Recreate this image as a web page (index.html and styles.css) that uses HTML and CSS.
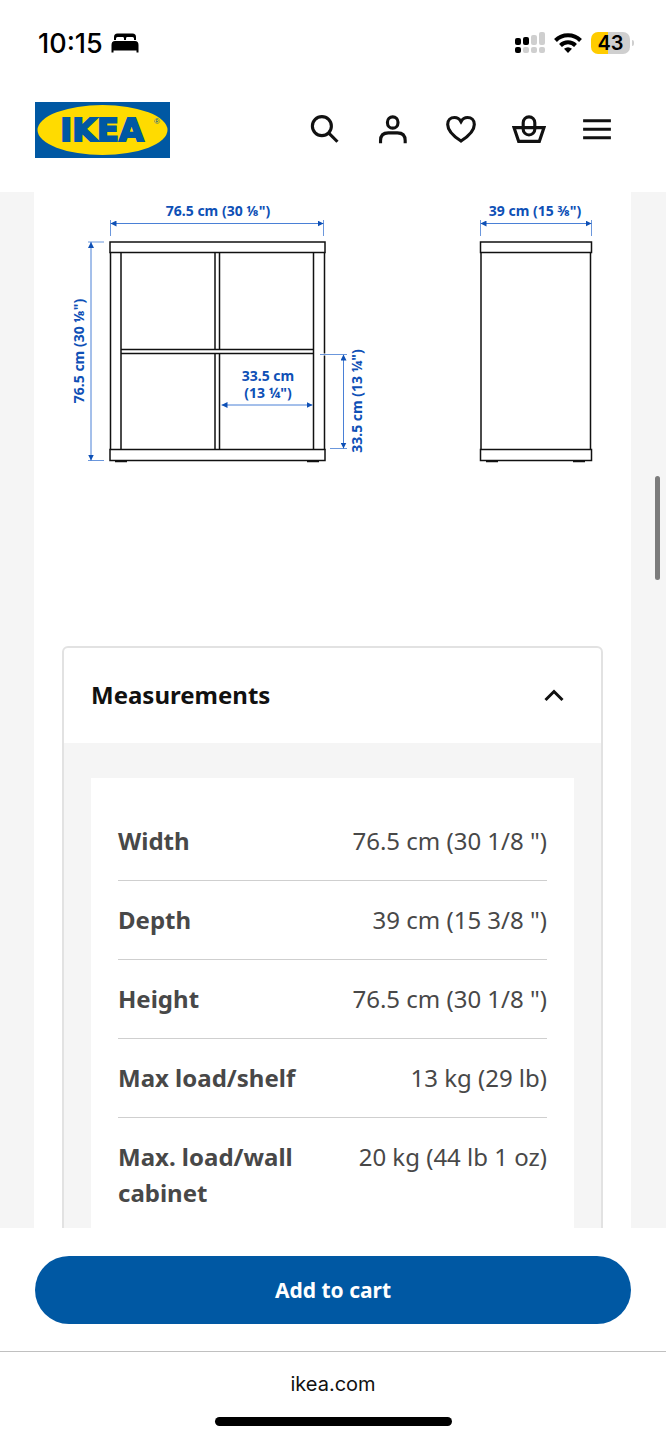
FILE: index.html
```html
<!DOCTYPE html>
<html lang="en">
<head>
  <meta charset="UTF-8" />
  <meta name="viewport" content="width=device-width, initial-scale=1" />
  <title>Measurements - IKEA</title>
  <link rel="stylesheet" href="styles.css">
</head>
<body>
  <!-- Phone status bar -->
  <div class="status-bar">
    <div class="status-left">
      <span class="time">10:15</span>
      <svg class="bed" width="28" height="20" viewBox="0 0 28 20">
        <path d="M3 7V4q0-3.500 3.500-3.500h15q3.500 0 3.500 3.500v3h-2V5.500q0-1.500-1.500-1.500H16q-1 0-1 1.500V7h-2V5.500Q13 4 12 4H6.500Q5 4 5 5.500V7z" />
        <path d="M4 8h20q3.500 0 3.500 4v7.500h-2V17.500h-23v2h-2V12q0-4 3.500-4z" />
      </svg>
    </div>
    <div class="status-right">
      <svg width="30" height="22" viewBox="0 0 30 22">
        <rect x="0" y="6" width="6" height="7" rx="2" />
        <rect x="8" y="5" width="6" height="8" rx="2" />
        <g fill="#cfcfcf">
          <rect x="16" y="3" width="6" height="10" rx="2" />
          <rect x="24" y="0" width="6" height="13" rx="2" />
          <rect x="8" y="15" width="6" height="6" rx="2" />
          <rect x="16" y="15" width="6" height="6" rx="2" />
          <rect x="24" y="15" width="6" height="6" rx="2" />
        </g>
        <rect x="0" y="15" width="6" height="6" rx="2" />
      </svg>
      <svg width="28" height="20" viewBox="0 0 28 20">
        <g fill="none" stroke="#000" stroke-width="4">
          <path d="M1.500 7.500a17.500 17.500 0 0 1 25 0" />
          <path d="M6.500 12.500a10.500 10.500 0 0 1 15 0" />
        </g>
        <path d="M14 20l-4-4.200q4-3.200 8 0z" />
      </svg>
      <span class="battery">43</span>
    </div>
  </div>

  <header class="site-header">
    <a class="logo" href="#" aria-label="IKEA">
      <svg width="135" height="56" viewBox="0 0 135 56">
        <rect width="135" height="56" fill="#0058a3" />
        <ellipse cx="67.500" cy="28" rx="65" ry="25" fill="#ffdb00" />
        <text class="logo-text" x="67" y="39" text-anchor="middle">IKEA</text>
        <text class="logo-mark" x="122" y="22" text-anchor="middle">®</text>
      </svg>
    </a>
    <nav class="header-icons">
      <button aria-label="Search">
        <svg viewBox="0 0 24 24"><circle cx="9.800" cy="10" r="6.700" /><path d="M14.500 14.700l6.300 6.300" /></svg>
      </button>
      <button aria-label="Account">
        <svg viewBox="0 0 24 24"><rect x="8.100" y="3.400" width="7.400" height="8" rx="3.700" /><path d="M3.200 22v-1.800q0-5.500 5.500-5.500h6.400q5.500 0 5.500 5.500V22" /></svg>
      </button>
      <button aria-label="Favourites">
        <svg viewBox="0 0 24 24"><path d="M12 20.500C5.500 16.300 2.600 12.800 2.600 8.800c0-2.900 2-4.900 4.800-4.900 2 0 3.600 1.100 4.600 2.900 1-1.800 2.600-2.900 4.600-2.900 2.800 0 4.800 2 4.800 4.900 0 4-2.900 7.500-9.400 11.700z" /></svg>
      </button>
      <button aria-label="Shopping basket">
        <svg viewBox="0 0 24 24"><path d="M1.400 11h21.200l-3.300 9.700H4.700z" /><rect x="7.900" y="3.400" width="8.200" height="12.800" rx="4.100" /></svg>
      </button>
      <button aria-label="Menu">
        <svg viewBox="0 0 24 24"><path d="M2.200 6.200h19.600M2.200 12.200h19.600M2.200 18.200h19.600" /></svg>
      </button>
    </nav>
  </header>

  <div class="viewport">
    <main class="sheet">
      <!-- Dimension drawing: front view and side view -->
      <svg class="drawing" viewBox="0 0 597 290" role="img" aria-label="Shelf unit dimensions">
        <defs>
          <marker id="arrow" viewBox="0 0 6 6" refX="6" refY="3" markerWidth="6" markerHeight="6" markerUnits="userSpaceOnUse" orient="auto-start-reverse">
            <path d="M0 0l6 3-6 3z" fill="#0e50b6" />
          </marker>
        </defs>

        <g class="outline">
          <rect x="76" y="50" width="215" height="10.500" />
          <rect x="76" y="257.500" width="215" height="11" />
          <path d="M76.500 60v198M87 60v198M279.500 60v198M290.500 60v198" />
          <path d="M181 60v97.500M185.500 60v97.500M181 161.500v96M185.500 161.500v96" />
          <path d="M87 157.500h192.500M87 161.500h192.500" />
          <path d="M81 269.500h12M273 269.500h12" />

          <rect x="446.500" y="50" width="111" height="10.500" />
          <rect x="446.500" y="257.500" width="111" height="11" />
          <path d="M447 60v198M556.500 60v198" />
          <path d="M452 269.500h12M539 269.500h12" />
        </g>

        <path d="M286 162.500h6" stroke="#fff" stroke-width="2" />
        <g class="ticks">
          <path d="M76.500 28v16M289.500 28v16M446.500 28v16M557.500 28v16" />
          <path d="M54 50h16M54 268.500h16M286 162.500h27M296 256.500h17" />
        </g>
        <g class="arrows">
          <path d="M76.500 31.500h213" />
          <path d="M446.500 31.500h111" />
          <path d="M57 50v218.500" />
          <path d="M187.500 213h91" />
          <path d="M309.500 162.500v94" />
        </g>

        <g class="labels">
          <text x="184" y="24">76.5 cm (30 ⅛")</text>
          <text x="501" y="24">39 cm (15 ⅜")</text>
          <text x="234" y="189">33.5 cm</text>
          <text x="234" y="206">(13 ¼")</text>
          <text transform="translate(50 159) rotate(-90)">76.5 cm (30 ⅛")</text>
          <text transform="translate(328 209) rotate(-90)">33.5 cm (13 ¼")</text>
        </g>
      </svg>

      <details class="card" open>
        <summary>
          <h2>Measurements</h2>
          <svg width="20" height="14" viewBox="0 0 20 14"><path d="M1.500 12L10 3.500l8.500 8.500" /></svg>
        </summary>
        <div class="card-body">
          <table>
            <tr><th scope="row">Width</th><td>76.5 cm (30 1/8 ")</td></tr>
            <tr><th scope="row">Depth</th><td>39 cm (15 3/8 ")</td></tr>
            <tr><th scope="row">Height</th><td>76.5 cm (30 1/8 ")</td></tr>
            <tr><th scope="row">Max load/shelf</th><td>13 kg (29 lb)</td></tr>
            <tr><th scope="row">Max. load/wall cabinet</th><td>20 kg (44 lb 1 oz)</td></tr>
          </table>
        </div>
      </details>
    </main>
    <div class="scroll-thumb"></div>
  </div>

  <div class="buy-bar">
    <button class="add-to-cart">Add to cart</button>
  </div>

  <footer class="browser-bar">
    <span>ikea.com</span>
    <div class="home-indicator"></div>
  </footer>
</body>
</html>
```
FILE: styles.css
```css
* {
  box-sizing: border-box;
}

body {
  margin: 0;
  height: 100vh;
  display: flex;
  flex-direction: column;
  background: #fff;
  color: #111;
  font-family: "Noto Sans", sans-serif;
}

button {
  border: none;
  background: none;
  padding: 0;
  font-family: inherit;
  cursor: pointer;
}

/* status bar */
.status-bar {
  height: 86px;
  flex-shrink: 0;
  display: flex;
  justify-content: space-between;
  align-items: center;
  padding: 0 32px 0 38px;
  color: #000;
  font-family: Inter, sans-serif;
}

.status-left {
  display: flex;
  align-items: center;
  gap: 8px;
}

.time {
  font-size: 27px;
  font-weight: 500;
}

.status-right {
  display: flex;
  align-items: center;
  gap: 9px;
}

.battery {
  position: relative;
  width: 39px;
  height: 22px;
  margin-right: 4px;
  border-radius: 7px;
  background: linear-gradient(to right, #ffcc00 43%, #cfcfcf 43%);
  font-size: 20px;
  line-height: 22px;
  font-weight: 600;
  text-align: center;
}

.battery::after {
  content: "";
  position: absolute;
  right: -4px;
  top: 8px;
  width: 2px;
  height: 6px;
  border-radius: 0 2px 2px 0;
  background: #cfcfcf;
}

/* header */
.site-header {
  height: 106px;
  flex-shrink: 0;
  display: flex;
  justify-content: space-between;
  align-items: flex-start;
  padding: 16px 35px 0;
}

.logo svg {
  display: block;
}

.logo-text {
  font-family: "DejaVu Sans", sans-serif;
  font-size: 32px;
  font-weight: bold;
  fill: #0058a3;
  stroke: #0058a3;
  stroke-width: 2;
}

.logo-mark {
  font-family: "Liberation Sans", sans-serif;
  font-size: 8px;
  fill: #0058a3;
}

.header-icons {
  display: flex;
}

.header-icons button {
  width: 68px;
  height: 54px;
  display: flex;
  align-items: center;
  justify-content: center;
}

.header-icons svg {
  width: 34px;
  height: 34px;
  fill: none;
  stroke: #111;
  stroke-width: 2.2;
}

/* scrolling page */
.viewport {
  position: relative;
  flex: 1;
  min-height: 0;
  padding: 0 35px 0 34px;
  background: #f5f5f5;
}

.sheet {
  height: 100%;
  overflow-y: auto;
  scrollbar-width: none;
  padding: 0 28px;
  background: #fff;
}

.scroll-thumb {
  position: absolute;
  top: 284px;
  right: 6px;
  width: 5px;
  height: 104px;
  border-radius: 3px;
  background: #7c7c7c;
}

.drawing {
  display: block;
  width: calc(100% + 56px);
  margin: 0 -28px 164px;
}

.outline {
  fill: none;
  stroke: #111;
  stroke-width: 1.5;
}

.ticks {
  stroke: #6b97dc;
}

.arrows {
  stroke: #4a80d6;
}

.arrows path {
  marker-start: url(#arrow);
  marker-end: url(#arrow);
}

.labels {
  font-size: 14px;
  font-weight: bold;
  fill: #0e50b6;
  text-anchor: middle;
}

/* measurements card */
.card {
  border: 2px solid #e2e2e2;
  border-radius: 6px;
  overflow: hidden;
}

.card summary {
  height: 95px;
  display: flex;
  justify-content: space-between;
  align-items: center;
  padding: 0 37px 2px 27px;
  list-style: none;
  cursor: pointer;
}

.card summary svg {
  fill: none;
  stroke: #111;
  stroke-width: 3;
}

.card h2 {
  margin: 0;
  font-size: 24px;
}

.card-body {
  padding: 35px 27px;
  background: #f5f5f5;
}

table {
  width: 100%;
  display: block;
  padding: 24px 27px;
  background: #fff;
  color: #484848;
  font-size: 24px;
  line-height: 36px;
}

tbody {
  display: block;
}

tr {
  display: flex;
  justify-content: space-between;
  gap: 20px;
  padding: 21px 0;
  border-bottom: 1px solid #cfcfcf;
}

th {
  padding: 0;
  text-align: left;
}

td {
  padding: 0;
  text-align: right;
  white-space: nowrap;
}

/* bottom bars */
.buy-bar {
  flex-shrink: 0;
  padding: 28px 35px 27px;
}

.add-to-cart {
  display: block;
  width: 100%;
  height: 68px;
  border-radius: 34px;
  background: #0058a3;
  color: #fff;
  font-size: 21px;
  font-weight: bold;
}

.browser-bar {
  height: 89px;
  flex-shrink: 0;
  display: flex;
  flex-direction: column;
  align-items: center;
  justify-content: space-between;
  padding: 20px 0 14px;
  border-top: 1px solid #c0c0c0;
  color: #111;
  font-family: Inter, sans-serif;
  font-size: 20px;
  line-height: 24px;
}

.home-indicator {
  width: 237px;
  height: 9px;
  border-radius: 5px;
  background: #000;
}
```
